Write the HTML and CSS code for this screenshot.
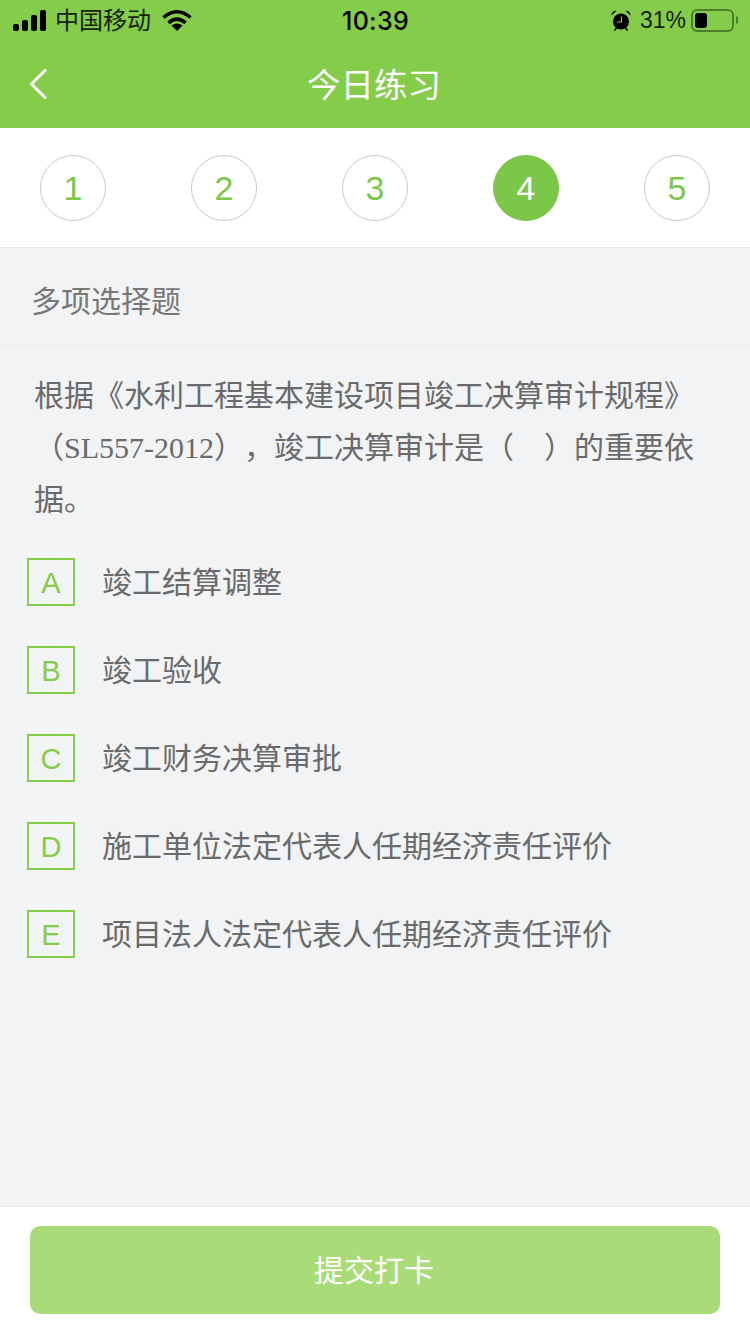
FILE: index.html
```html
<!DOCTYPE html>
<html lang="zh-CN">
<head>
  <meta charset="UTF-8">
  <title>今日练习</title>
  <meta name="viewport" content="width=device-width,initial-scale=1">
  <link rel="stylesheet" href="styles.css">
</head>
<body>

<header class="top">
  <div class="status">
    <div class="status-left">
      <svg class="signal" width="34" height="21" viewBox="0 0 34 21">
        <rect x="0" y="14" width="6" height="7" rx="2"/>
        <rect x="9" y="10" width="6" height="11" rx="2"/>
        <rect x="18" y="5" width="6" height="16" rx="2"/>
        <rect x="27" y="0" width="6" height="21" rx="2"/>
      </svg>
      <span class="carrier">中国移动</span>
      <svg class="wifi" width="30" height="22" viewBox="0 0 30 22">
        <path d="M1.5 8.5Q15 -3 28.5 8.5" fill="none" stroke="#000" stroke-width="3.6"/>
        <path d="M6.5 13.8Q15 6.5 23.5 13.8" fill="none" stroke="#000" stroke-width="3.6"/>
        <path d="M15 22L9.5 16.6Q15 12.6 20.5 16.6z"/>
      </svg>
    </div>
    <div class="clock">10:39</div>
    <div class="status-right">
      <svg class="alarm" width="20" height="21" viewBox="0 0 20 21">
        <circle cx="10" cy="11.5" r="8"/>
        <path d="M0.5 5.5C0.5 2 3 0.5 5.5 0.8zM19.5 5.5C19.5 2 17 0.5 14.5 0.8z"/>
        <path d="M3.5 20.5l2-2.5M16.5 20.5l-2-2.5" stroke="#000" stroke-width="1.5"/>
        <path d="M10.5 6.5v5.5H6" fill="none" stroke="#86cc4b" stroke-width="1.2"/>
      </svg>
      <span class="percent">31%</span>
      <div class="battery"><div class="battery-level"></div></div>
      <div class="battery-cap"></div>
    </div>
  </div>
  <nav class="nav">
    <svg class="back" width="20" height="32" viewBox="0 0 20 32">
      <path d="M17 2.5L3.5 16 17 29.5" fill="none" stroke="#fff" stroke-width="3" stroke-linecap="round" stroke-linejoin="round"/>
    </svg>
    <h1 class="nav-title">今日练习</h1>
  </nav>
</header>

<div class="steps">
  <div class="step">1</div>
  <div class="step">2</div>
  <div class="step">3</div>
  <div class="step active">4</div>
  <div class="step">5</div>
</div>

<div class="type">多项选择题</div>

<main class="question">
  <p class="stem">根据《水利工程基本建设项目竣工决算审计规程》（<span class="latin">SL557-2012</span>），竣工决算审计是（　）的重要依据。</p>
  <ul class="options">
    <li class="option"><span class="letter">A</span><span class="option-text">竣工结算调整</span></li>
    <li class="option"><span class="letter">B</span><span class="option-text">竣工验收</span></li>
    <li class="option"><span class="letter">C</span><span class="option-text">竣工财务决算审批</span></li>
    <li class="option"><span class="letter">D</span><span class="option-text">施工单位法定代表人任期经济责任评价</span></li>
    <li class="option"><span class="letter">E</span><span class="option-text">项目法人法定代表人任期经济责任评价</span></li>
  </ul>
</main>

<footer class="bottom">
  <button class="submit" type="button">提交打卡</button>
</footer>

</body>
</html>
```

FILE: styles.css
```css
* { box-sizing: border-box; }
html, body { height: 100%; }
body {
  margin: 0;
  height: 1334px;
  display: flex;
  flex-direction: column;
  overflow: hidden;
  background: #f2f3f5;
  color: #6a6a6a;
  font-family: "Liberation Sans", "Noto Sans CJK SC", sans-serif;
  text-spacing-trim: space-all;
}
.top {
  background: #86cc4b;
  height: 128px;
}
.status {
  height: 40px;
  padding: 0 12px 0 13px;
  display: grid;
  grid-template-columns: 1fr auto 1fr;
  align-items: center;
  color: #000;
}
.status-left, .status-right {
  display: flex;
  align-items: center;
}
.status-right { justify-content: flex-end; }
.carrier {
  font-size: 24px;
  line-height: 36px;
  margin: 2px 0 0 8px;
  color: #14230a;
}
.wifi { margin-left: 11px; }
.clock {
  margin-top: 2px;
  font-family: Inter, sans-serif;
  font-size: 25px;
  font-weight: 500;
  letter-spacing: 0.3px;
}
.percent {
  font-size: 23px;
  margin-left: 9px;
  color: #14230a;
}
.battery {
  width: 43px;
  height: 23px;
  margin-left: 5px;
  padding: 2px;
  border: 2px solid #4d7f2a;
  border-radius: 6px;
}
.battery-level {
  width: 12px;
  height: 100%;
  background: #000;
  border-radius: 3px;
}
.battery-cap {
  width: 2px;
  height: 8px;
  margin-left: 2px;
  background: #4d7f2a;
  border-radius: 0 2px 2px 0;
}
.nav {
  height: 88px;
  display: grid;
  grid-template-columns: 1fr auto 1fr;
  align-items: center;
}
.back { margin-left: 28px; }
.nav-title {
  margin: -4px 2px 0 0;
  font-size: 33.5px;
  font-weight: 400;
  color: #fff;
  font-family: "Noto Sans CJK SC", sans-serif;
}
.steps {
  height: 120px;
  padding: 0 40px;
  display: flex;
  justify-content: space-between;
  align-items: center;
  background: #fff;
  border-bottom: 1px solid #e9eaec;
}
.step {
  width: 66px;
  height: 66px;
  display: flex;
  align-items: center;
  justify-content: center;
  border: 1px solid #c9c9c9;
  border-radius: 50%;
  font-size: 34px;
  color: #7ac74a;
  margin-top: 1px;
}
.step.active {
  background: #7ac74a;
  border-color: #7ac74a;
  color: #fff;
}
.type {
  height: 98px;
  padding: 4px 0 0 31px;
  display: flex;
  align-items: center;
  font-size: 30px;
  color: #777;
  border-bottom: 1px solid #e9eaec;
}
.question { flex: 1; }
.stem {
  margin: 24px 25px 0 34px;
  font-size: 30px;
  line-height: 52px;
}
.latin { font-family: "Liberation Serif", serif; }
.options {
  list-style: none;
  margin: 32px 0 0 27px;
  padding: 0;
}
.option {
  height: 48px;
  margin-bottom: 40px;
  display: flex;
  align-items: center;
  font-size: 30px;
}
.option-text { margin-bottom: 4px; }
.letter {
  width: 48px;
  height: 48px;
  margin-right: 27px;
  padding-top: 2px;
  display: flex;
  align-items: center;
  justify-content: center;
  border: 2px solid #86cc4b;
  font-size: 29px;
  color: #86cc4b;
}
.bottom {
  height: 128px;
  padding: 19px 30px;
  background: #fff;
  border-top: 1px solid #e9eaec;
}
.submit {
  display: block;
  width: 100%;
  height: 88px;
  padding: 0 2px 4px 0;
  border: 0;
  border-radius: 10px;
  background: #a9dc78;
  color: #fff;
  font-family: inherit;
  font-size: 30px;
}
```
